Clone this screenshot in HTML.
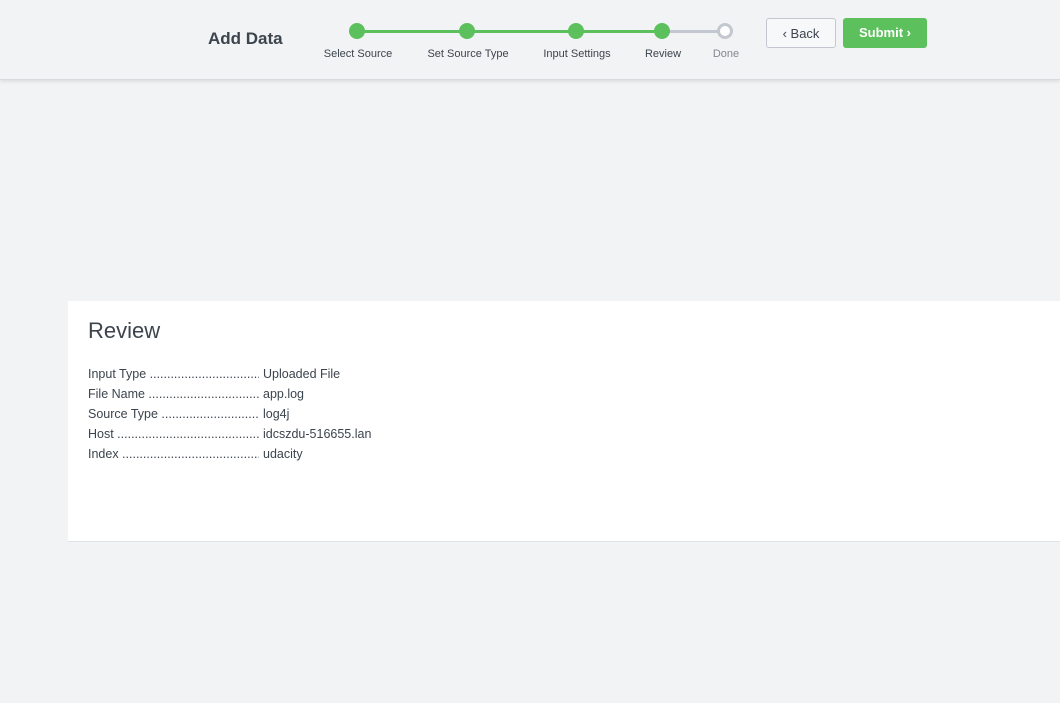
<!DOCTYPE html>
<html><head><style>
body{margin:0;width:1060px;height:703px;background:#f2f3f5;font-family:"Liberation Sans",sans-serif;position:relative;overflow:hidden;color:#3c444d}
.hdr{position:absolute;left:0;top:0;width:1060px;height:79px;background:#f2f3f5;border-bottom:1px solid #d7dadf;box-shadow:0 2px 3px rgba(0,0,0,.08)}
.t{position:absolute;left:208px;top:29px;font-size:17px;font-weight:bold;color:#3c444d}
.line{position:absolute;top:30px;height:3px}
.dot{position:absolute;top:23px;width:16px;height:16px;border-radius:50%;background:#5cc05c}
.lbl{position:absolute;top:48px;font-size:11px;color:#3c444d;transform:translateX(-50%);white-space:nowrap}
.btn{position:absolute;top:18px;height:30px;border-radius:3px;font-size:13px;line-height:30px;text-align:center;box-sizing:border-box}
.card{position:absolute;left:68px;top:301px;width:992px;height:240px;background:#fff;border-bottom:1px solid #e1e3e6}
h1{position:absolute;left:20px;top:17px;margin:0;font-weight:normal;font-size:22px;color:#3c444d}
.rows{position:absolute;left:20px;top:63px;font-size:12.5px;line-height:20px}
.k{display:inline-block;width:171px;margin-right:4px;overflow:hidden;white-space:nowrap;vertical-align:top}
</style></head><body>
<div class="hdr">
<div class="t">Add Data</div>
<div class="line" style="left:357px;width:305px;background:#5cc05c"></div>
<div class="line" style="left:662px;width:63px;background:#c3c8d0"></div>
<div class="dot" style="left:349px"></div>
<div class="dot" style="left:459px"></div>
<div class="dot" style="left:568px"></div>
<div class="dot" style="left:654px"></div>
<div class="dot" style="left:717px;background:#fff;border:3px solid #c3c8d0;box-sizing:border-box"></div>
<div class="lbl" style="left:358px">Select Source</div>
<div class="lbl" style="left:468px">Set Source Type</div>
<div class="lbl" style="left:577px">Input Settings</div>
<div class="lbl" style="left:663px">Review</div>
<div class="lbl" style="left:726px;color:#818890">Done</div>
<div class="btn" style="left:766px;width:70px;background:#f7f8fa;border:1px solid #c3c8d0;color:#3c444d">‹ Back</div>
<div class="btn" style="left:843px;width:84px;background:#5cc05c;color:#fff;font-weight:bold">Submit ›</div>
</div>
<div class="card">
<h1>Review</h1>
<div class="rows">
<div><span class="k">Input Type ..........................................................</span>Uploaded File</div>
<div><span class="k">File Name ..........................................................</span>app.log</div>
<div><span class="k">Source Type ..........................................................</span>log4j</div>
<div><span class="k">Host ..........................................................</span>idcszdu-516655.lan</div>
<div><span class="k">Index ..........................................................</span>udacity</div>
</div>
</div>
</body></html>
